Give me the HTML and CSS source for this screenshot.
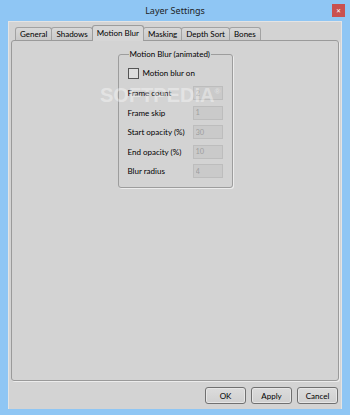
FILE: index.html
```html
<!DOCTYPE html>
<html lang="en">
<head>
    <meta charset="UTF-8">
    <title>Layer Settings</title>
    <link rel="stylesheet" href="styles.css">
</head>
<body>
    <div class="window">
        <div class="titlebar">
            <span class="title">Layer Settings</span>
            <span class="close">&#x2715;</span>
        </div>
        <div class="client">
            <div class="tabs">
                <div class="tab">General</div>
                <div class="tab">Shadows</div>
                <div class="tab active">Motion Blur</div>
                <div class="tab">Masking</div>
                <div class="tab">Depth Sort</div>
                <div class="tab">Bones</div>
            </div>
            <div class="panel">
                <fieldset class="group">
                    <legend>Motion Blur (animated)</legend>
                    <label class="check"><span class="box"></span>Motion blur on</label>
                    <div class="row"><span>Frame count</span><input type="text" value="2" disabled></div>
                    <div class="row"><span>Frame skip</span><input type="text" value="1" disabled></div>
                    <div class="row"><span>Start opacity (%)</span><input type="text" value="30" disabled></div>
                    <div class="row"><span>End opacity (%)</span><input type="text" value="10" disabled></div>
                    <div class="row"><span>Blur radius</span><input type="text" value="4" disabled></div>
                </fieldset>
                <div class="watermark">SOFTPEDIA<sup>&reg;</sup></div>
            </div>
            <div class="buttons">
                <button>OK</button>
                <button>Apply</button>
                <button>Cancel</button>
            </div>
        </div>
    </div>
</body>
</html>
```

FILE: styles.css
```css
html, body {
    margin: 0;
    padding: 0;
}
body {
    background-color: #8fc6f4;
    font-family: Lato, sans-serif;
    font-size: 8px;
    color: #000;
}
.window {
    width: 350px;
    height: 415px;
    display: flex;
    flex-direction: column;
}
.titlebar {
    height: 21px;
    position: relative;
    display: flex;
    align-items: center;
    justify-content: center;
}
.title {
    font-family: "Noto Sans", sans-serif;
    font-size: 9px;
    color: #1e1e1e;
    margin-top: -1px;
}
.close {
    position: absolute;
    right: 5px;
    top: 4px;
    width: 13px;
    height: 13px;
    background-color: #c9504f;
    color: #fff;
    font-size: 6px;
    display: flex;
    align-items: center;
    justify-content: center;
}
.client {
    margin: 0 8px 6px 8px;
    flex: 1;
    background-color: #d3d3d3;
    border: 1px solid #e4e4e4;
    border-bottom: none;
    display: flex;
    flex-direction: column;
    padding: 4px 2px 5px 2px;
}
.tabs {
    display: flex;
    align-items: flex-end;
    padding-left: 4px;
    height: 14px;
    position: relative;
    z-index: 1;
}
.tab {
    height: 12px;
    line-height: 12px;
    padding: 0 4px;
    border: 1px solid #a2a2a2;
    border-bottom: none;
    border-radius: 3px 3px 0 0;
    background: linear-gradient(#d8d8d8, #c9c9c9);
    margin-right: -1px;
    white-space: nowrap;
}
.tab.active {
    height: 15px;
    line-height: 15px;
    background: #d6d6d6;
    margin-bottom: -1px;
    border-color: #9c9c9c;
}
.panel {
    flex: 1;
    border: 1px solid #9a9a9a;
    border-radius: 3px;
    box-shadow: 1px 1px 0 #ececec;
    background-color: #d3d3d3;
    position: relative;
    display: flex;
    justify-content: center;
    align-items: flex-start;
}
.group {
    margin: 8px 0 0 0;
    padding: 7px 9px 3px 9px;
    width: 95px;
    min-width: 0;
    border: 1px solid #9d9d9d;
    border-radius: 3px;
    box-shadow: 1px 1px 0 #ececec;
}
.group legend {
    padding: 0 1px;
    margin-left: 1px;
    white-space: nowrap;
}
.check {
    display: flex;
    align-items: center;
    height: 14px;
    margin-bottom: 6px;
}
.box {
    width: 9px;
    height: 9px;
    border: 1px solid #555;
    background-color: #dedede;
    margin-right: 4px;
}
.row {
    display: flex;
    justify-content: space-between;
    align-items: center;
    height: 14px;
    margin-bottom: 5.5px;
}
.row input {
    width: 24px;
    height: 12px;
    padding: 0 2px;
    border: 1px solid #bdbdbd;
    background-color: #cacaca;
    color: #9e9e9e;
    font-family: inherit;
    font-size: 7.5px;
    margin: 0;
}
.watermark {
    position: absolute;
    left: 88px;
    top: 43px;
    font-family: "Liberation Sans", sans-serif;
    font-weight: bold;
    font-size: 20px;
    color: rgba(255, 255, 255, 0.4);
    pointer-events: none;
}
.watermark sup {
    font-size: 8px;
}
.buttons {
    display: flex;
    justify-content: flex-end;
    gap: 5px;
    padding-top: 6px;
    padding-right: 1px;
}
button {
    width: 41px;
    height: 17px;
    font-family: inherit;
    font-size: 8px;
    color: #000;
    background: linear-gradient(#dcdcdc, #cfcfcf);
    border: 1px solid #707070;
    border-radius: 3px;
    box-shadow: inset 0 0 0 1px #e6e6e6;
    padding: 0;
}
```
